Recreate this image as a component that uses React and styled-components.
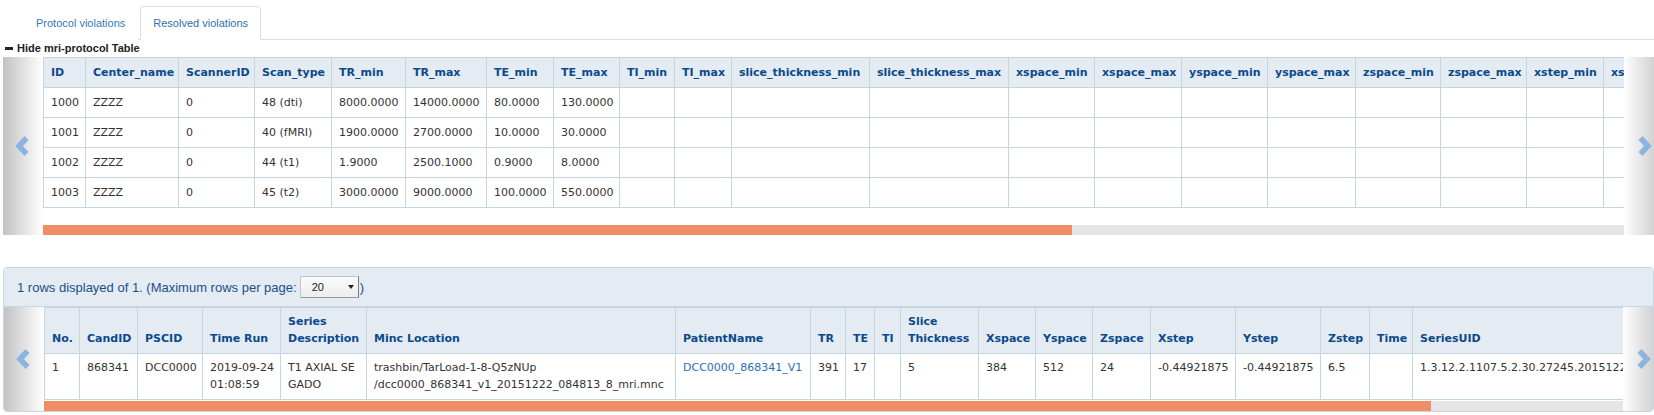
import React from 'react';
import styled, { createGlobalStyle } from 'styled-components';

const GlobalStyle = createGlobalStyle`
  html, body {
    margin: 0;
    padding: 0;
    background: #fff;
    overflow: hidden;
  }
  body {
    font-family: "Liberation Sans", Arial, sans-serif;
    color: #333;
  }
`;

const Page = styled.div`
  width: 1654px;
  padding-top: 6px;
  overflow: hidden;
`;

const TabList = styled.ul`
  display: flex;
  list-style: none;
  margin: 0 0 0 23px;
  padding: 0;
  border-bottom: 1px solid #ddd;
`;

const Tab = styled.li`
  margin: 0 2px -1px 0;
  padding: 9px 12px;
  font-size: 11px;
  line-height: 14px;
  color: ${p => (p.$active ? '#2f6fae' : '#337ab7')};
  background: #fff;
  border: 1px solid ${p => (p.$active ? '#ddd' : 'transparent')};
  border-bottom-color: ${p => (p.$active ? '#fff' : 'transparent')};
  border-radius: 4px 4px 0 0;
  cursor: pointer;
`;

const ToggleRow = styled.div`
  display: flex;
  align-items: center;
  gap: 4px;
  height: 14px;
  margin: 1px 0 2px 5px;
  font: bold 11px/14px "Liberation Sans", Arial, sans-serif;
  color: #222;
  cursor: pointer;
`;

const MinusIcon = styled.span`
  width: 8px;
  height: 3px;
  background: #222;
`;

const Carousel = styled.div`
  display: flex;
  margin-left: ${p => (p.$inPanel ? 0 : 3)}px;
`;

const SideControl = styled.div`
  flex: 0 0 ${p => (p.$side === 'left' ? 40 : 30)}px;
  display: flex;
  align-items: center;
  justify-content: ${p => (p.$side === 'left' ? 'flex-start' : 'flex-end')};
  padding: ${p => (p.$side === 'left' ? '0 0 0 11px' : '0 1px 0 0')};
  box-sizing: border-box;
  background: ${p =>
    p.$side === 'left'
      ? 'linear-gradient(to right, #c2c2c2, #ffffff)'
      : 'linear-gradient(to right, #ffffff, #d2d2d2)'};
`;

const Viewport = styled.div`
  flex: 1;
  min-width: 0;
  overflow: hidden;
  display: flex;
  flex-direction: column;
  gap: ${p => p.$gap}px;
`;

const Table = styled.table`
  border-collapse: collapse;
  table-layout: fixed;
  font-family: "DejaVu Sans", Verdana, sans-serif;
  font-size: 11px;
  line-height: ${p => p.$lineHeight || 17}px;
`;

const Th = styled.th`
  padding: 6px 5px 6px 7px;
  background: #e4ebf3;
  color: #0b4a8a;
  font-weight: bold;
  text-align: left;
  vertical-align: ${p => p.$valign || 'middle'};
  border: 1px solid #c5d5e0;
  white-space: ${p => (p.$wrap ? 'normal' : 'nowrap')};
`;

const Td = styled.td`
  padding: 6px 5px 6px 7px;
  color: #333;
  background: #fff;
  vertical-align: top;
  border: 1px solid #c5d5e0;
  white-space: ${p => (p.$wrap ? 'normal' : 'nowrap')};
  overflow: hidden;
`;

const CellLink = styled.a`
  color: #2a6ebb;
  text-decoration: none;
`;

const ScrollTrack = styled.div`
  flex: 0 0 10px;
  background: #e5e5e5;
`;

const ScrollThumb = styled.div`
  height: 100%;
  background: #ef8d67;
`;

const Panel = styled.section`
  width: 1651px;
  box-sizing: border-box;
  margin: 32px 0 0 3px;
  border: 1px solid #c8d6e2;
  border-radius: 4px;
  background: #fff;
  overflow: hidden;
`;

const PanelHeading = styled.div`
  display: flex;
  align-items: center;
  height: 38px;
  padding: 0 13px;
  background: #e4ebf3;
  border-bottom: 1px solid #c8d6e2;
  font-size: 13px;
  color: #1c4f88;
`;

const FakeSelect = styled.span`
  display: inline-flex;
  align-items: center;
  justify-content: space-between;
  width: 59px;
  height: 22px;
  box-sizing: border-box;
  margin: 0 1px 0 3px;
  padding: 0 4px 0 11px;
  border: 1px solid #c4c4c4;
  border-right-color: #7a7a7a;
  border-bottom-color: #9a9a9a;
  background: linear-gradient(#fbfbfb, #ededed);
  font-size: 11px;
  color: #222;
`;

const Caret = styled.span`
  width: 0;
  height: 0;
  border-left: 3px solid transparent;
  border-right: 3px solid transparent;
  border-top: 4px solid #222;
`;

const Chevron = ({ dir }) => (
  <svg width="16" height="22" viewBox="0 0 16 22">
    <polyline
      points={dir === 'left' ? '12.5,3 5,11 12.5,19' : '3.5,3 11,11 3.5,19'}
      fill="none"
      stroke="#8db4df"
      strokeWidth="5.5"
      strokeLinejoin="miter"
    />
  </svg>
);

const protocolCols = [
  ['ID', 42], ['Center_name', 93], ['ScannerID', 76], ['Scan_type', 77],
  ['TR_min', 74], ['TR_max', 81], ['TE_min', 67], ['TE_max', 66],
  ['TI_min', 55], ['TI_max', 57], ['slice_thickness_min', 138], ['slice_thickness_max', 139],
  ['xspace_min', 86], ['xspace_max', 87], ['yspace_min', 86], ['yspace_max', 88],
  ['zspace_min', 85], ['zspace_max', 86], ['xstep_min', 77], ['xstep_max', 80],
  ['ystep_min', 80], ['ystep_max', 82], ['zstep_min', 80], ['zstep_max', 82],
  ['time_min', 72], ['time_max', 74], ['series_description_regex', 170],
];

const protocolRows = [
  ['1000', 'ZZZZ', '0', '48 (dti)', '8000.0000', '14000.0000', '80.0000', '130.0000'],
  ['1001', 'ZZZZ', '0', '40 (fMRI)', '1900.0000', '2700.0000', '10.0000', '30.0000'],
  ['1002', 'ZZZZ', '0', '44 (t1)', '1.9000', '2500.1000', '0.9000', '8.0000'],
  ['1003', 'ZZZZ', '0', '45 (t2)', '3000.0000', '9000.0000', '100.0000', '550.0000'],
];

const violationCols = [
  ['No.', 35], ['CandID', 58], ['PSCID', 65], ['Time Run', 78], ['Series Description', 86],
  ['Minc Location', 309], ['PatientName', 135], ['TR', 35], ['TE', 29], ['TI', 26],
  ['Slice Thickness', 78], ['Xspace', 57], ['Yspace', 57], ['Zspace', 58], ['Xstep', 85],
  ['Ystep', 85], ['Zstep', 49], ['Time', 43], ['SeriesUID', 380],
];

const sum = cols => cols.reduce((t, c) => t + c[1], 0);

function ColGroup({ cols }) {
  return (
    <colgroup>
      {cols.map(([name, w]) => (
        <col key={name} style={{ width: w }} />
      ))}
    </colgroup>
  );
}

function Side({ side }) {
  return (
    <SideControl $side={side}>
      <Chevron dir={side} />
    </SideControl>
  );
}

function ProtocolTable() {
  return (
    <Carousel>
      <Side side="left" />
      <Viewport $gap={17}>
        <Table style={{ width: sum(protocolCols) }}>
          <ColGroup cols={protocolCols} />
          <thead>
            <tr>
              {protocolCols.map(([name]) => (
                <Th key={name}>{name}</Th>
              ))}
            </tr>
          </thead>
          <tbody>
            {protocolRows.map(row => (
              <tr key={row[0]}>
                {protocolCols.map(([name], i) => (
                  <Td key={name}>{row[i] || ''}</Td>
                ))}
              </tr>
            ))}
          </tbody>
        </Table>
        <ScrollTrack>
          <ScrollThumb style={{ width: 1029 }} />
        </ScrollTrack>
      </Viewport>
      <Side side="right" />
    </Carousel>
  );
}

function ViolationsTable() {
  return (
    <Carousel $inPanel>
      <Side side="left" />
      <Viewport $gap={1}>
        <Table $lineHeight={16.5} style={{ width: sum(violationCols) }}>
          <ColGroup cols={violationCols} />
          <thead>
            <tr>
              {violationCols.map(([name]) => (
                <Th key={name} $valign="bottom" $wrap>
                  {name}
                </Th>
              ))}
            </tr>
          </thead>
          <tbody>
            <tr>
              <Td>1</Td>
              <Td>868341</Td>
              <Td>DCC0000</Td>
              <Td $wrap>2019-09-24 01:08:59</Td>
              <Td $wrap>T1 AXIAL SE GADO</Td>
              <Td>
                trashbin/TarLoad-1-8-Q5zNUp
                <br />
                /dcc0000_868341_v1_20151222_084813_8_mri.mnc
              </Td>
              <Td>
                <CellLink href="#">DCC0000_868341_V1</CellLink>
              </Td>
              <Td>391</Td>
              <Td>17</Td>
              <Td></Td>
              <Td>5</Td>
              <Td>384</Td>
              <Td>512</Td>
              <Td>24</Td>
              <Td>-0.44921875</Td>
              <Td>-0.44921875</Td>
              <Td>6.5</Td>
              <Td></Td>
              <Td>1.3.12.2.1107.5.2.30.27245.2015122208444385683517.0.0.0</Td>
            </tr>
          </tbody>
        </Table>
        <ScrollTrack>
          <ScrollThumb style={{ width: 1387 }} />
        </ScrollTrack>
      </Viewport>
      <Side side="right" />
    </Carousel>
  );
}

export default function App() {
  return (
    <Page>
      <GlobalStyle />
      <TabList>
        <Tab>Protocol violations</Tab>
        <Tab $active>Resolved violations</Tab>
      </TabList>
      <ToggleRow>
        <MinusIcon />
        Hide mri-protocol Table
      </ToggleRow>
      <ProtocolTable />
      <Panel>
        <PanelHeading>
          1 rows displayed of 1. (Maximum rows per page:
          <FakeSelect>
            20
            <Caret />
          </FakeSelect>
          )
        </PanelHeading>
        <ViolationsTable />
      </Panel>
    </Page>
  );
}
